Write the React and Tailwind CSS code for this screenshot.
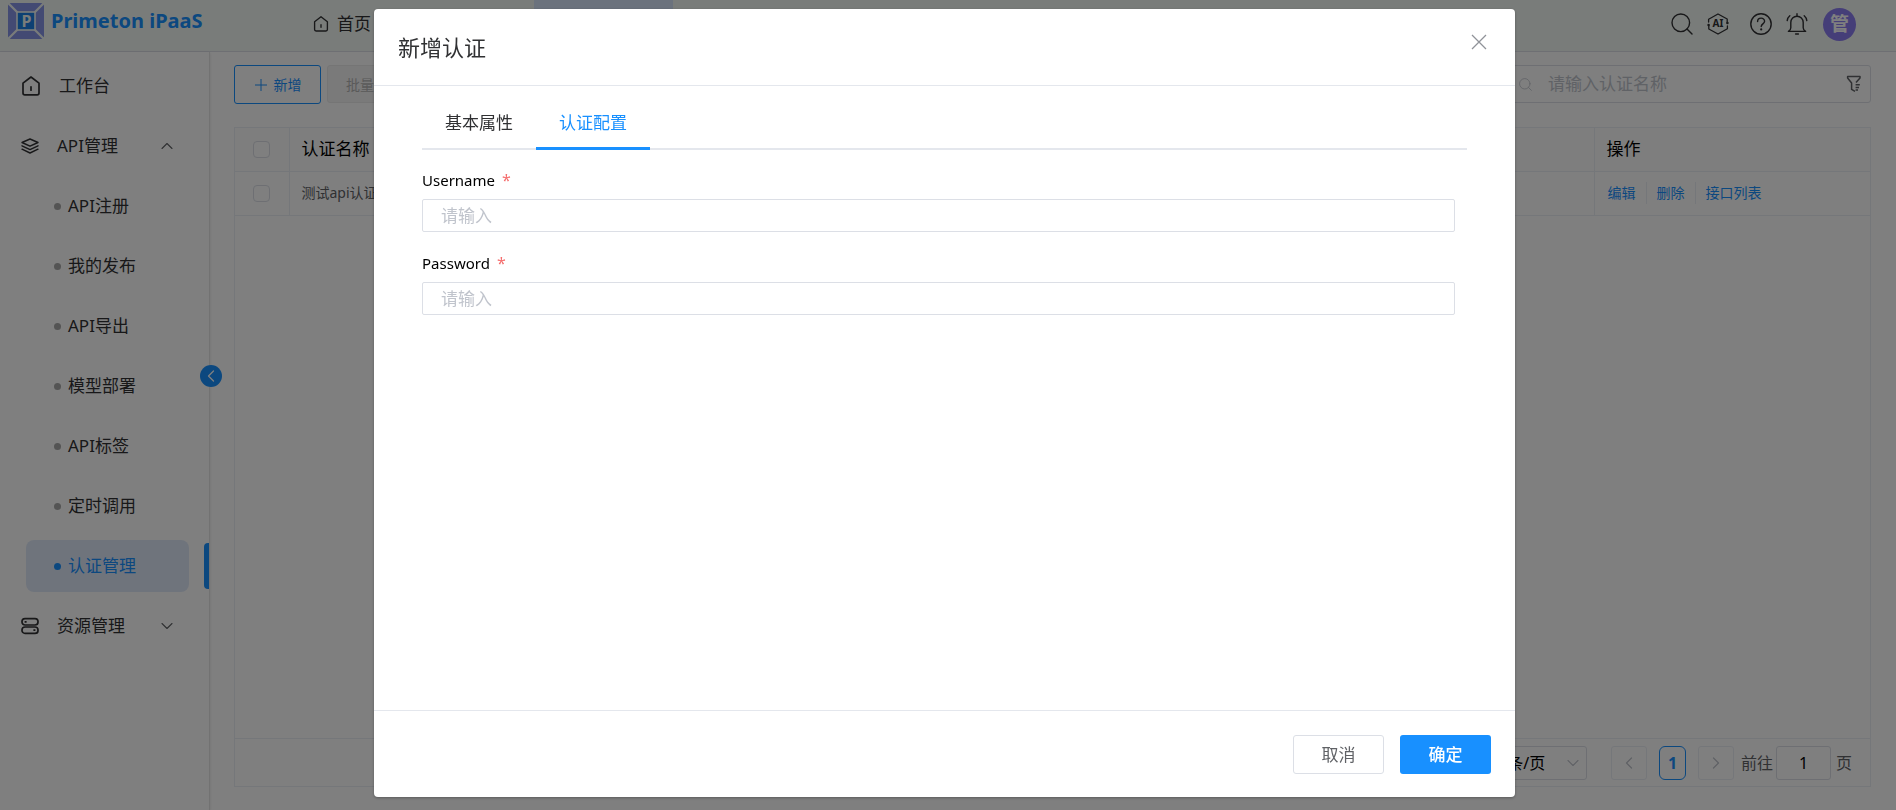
import React, { useState } from "react";
import { FiChevronDown, FiChevronLeft, FiChevronRight, FiChevronUp } from "react-icons/fi";

const apiMenu = ["API注册", "我的发布", "API导出", "模型部署", "API标签", "定时调用", "认证管理"];

const tabs = ["基本属性", "认证配置"];

const fields = [
  { id: "username", label: "Username" },
  { id: "password", label: "Password" },
];

const HomeIcon = ({ className }) => (
  <svg viewBox="0 0 20 20" className={className} fill="none" stroke="currentColor" strokeWidth="1.7" strokeLinejoin="round" strokeLinecap="round">
    <path d="M2 7.2 10 1l8 6.2V17a1.8 1.8 0 0 1-1.8 1.8H3.8A1.8 1.8 0 0 1 2 17z" />
    <path d="M10 10.8v3.4" />
  </svg>
);

const LayersIcon = () => (
  <svg viewBox="0 0 18 18" className="size-[18px]" fill="none" stroke="currentColor" strokeWidth="1.4" strokeLinejoin="round" strokeLinecap="round">
    <path d="M9 2 17 5.5 9 9.2 1 5.5z" />
    <path d="m1 8.8 8 3.8 8-3.8M1 12.2 9 16l8-3.8" />
  </svg>
);

const ServerIcon = () => (
  <svg viewBox="0 0 18 18" className="size-[18px]" fill="none" stroke="currentColor" strokeWidth="1.7">
    <rect x="1" y="1.6" width="16" height="6.4" rx="3" />
    <rect x="1" y="10" width="16" height="6.4" rx="3" />
    <path d="M3.6 4.8h2M12.4 13.2h2" />
  </svg>
);

const SearchIcon = ({ className }) => (
  <svg viewBox="0 0 22 22" className={className} fill="none" stroke="currentColor" strokeWidth="1.4" strokeLinecap="round">
    <circle cx="9.8" cy="9.8" r="8.8" />
    <path d="m16 16 5 5" />
  </svg>
);

const AiIcon = () => (
  <svg viewBox="0 0 22 22" className="size-[22px]" fill="none" stroke="currentColor" strokeWidth="1.3" strokeLinejoin="round" strokeLinecap="round">
    <path d="M1.6 9V6.2L11 1l9.2 5v3M20.4 13v2.8L11 21l-9.2-5v-3" />
    <circle cx="1.6" cy="12" r="1.3" fill="currentColor" stroke="none" />
    <circle cx="20.4" cy="10" r="1.3" fill="currentColor" stroke="none" />
    <text x="11" y="14.4" textAnchor="middle" fontSize="10" fontWeight="bold" fill="currentColor" stroke="none">AI</text>
  </svg>
);

const HelpIcon = () => (
  <svg viewBox="0 0 22 22" className="size-[22px]" fill="none" stroke="currentColor" strokeWidth="1.4" strokeLinecap="round">
    <circle cx="11" cy="11" r="10.2" />
    <path d="M7.6 8.6c0-4.6 7-4.4 7-.4 0 2.6-3.4 2.8-3.4 5.4" />
    <circle cx="11.2" cy="16.4" r="1.1" fill="currentColor" stroke="none" />
  </svg>
);

const BellIcon = () => (
  <svg viewBox="0 0 22 22" className="size-[22px]" fill="none" stroke="currentColor" strokeWidth="1.4" strokeLinejoin="round" strokeLinecap="round">
    <path d="M2.4 18.4h17.2c-1.4-.8-2.4-2-2.4-3.6V9.4a6.2 6.2 0 0 0-12.4 0v5.4c0 1.6-1 2.8-2.4 3.6z" />
    <path d="M11 .8v2M9.6 21h2.8M3.8 2.8C2.4 4 1.4 5.6 1.2 7.6M18.2 2.8c1.4 1.2 2.4 2.8 2.6 4.8" />
  </svg>
);

const FilterIcon = () => (
  <svg viewBox="0 0 16 18" className="h-[18px] w-4" fill="none" stroke="currentColor" strokeWidth="1.5" strokeLinejoin="round">
    <path d="M10 7.6 14 3V1.4H1.6V3l4 5v6.4L9 16.4" />
    <path d="M9.6 9.8h4.2M9.6 12.4h3.4M9.6 15h2.4" />
  </svg>
);

const Logo = () => (
  <svg viewBox="0 0 36 36" className="size-9">
    <rect width="36" height="36" rx="3" fill="#8795e6" />
    <path d="m0 0 36 36M36 0 0 36" stroke="#f3f8f5" strokeWidth="2.2" />
    <rect x="9" y="9" width="18" height="18" fill="#1a80e6" stroke="#f3f8f5" strokeWidth="1.6" />
    <text x="18.4" y="24" textAnchor="middle" fontSize="16" fontWeight="bold" fill="#f3f8f5">P</text>
  </svg>
);

const Header = () => (
  <header className="flex h-[52px] shrink-0 items-start justify-between border-b border-[#dcdfe6] bg-[#f3f8f5] pl-2 pr-10 text-[#303133]">
    <div className="flex">
      <div className="flex w-[305px] items-start gap-[7px] pt-[3px]">
        <Logo />
        <h1 className="font-['Noto_Sans'] text-[20px] leading-9 font-bold text-[#1890ff]">Primeton iPaaS</h1>
      </div>
      <a href="#home" className="flex h-12 items-center gap-2 text-[17px]">
        <HomeIcon className="size-4" />
        首页
      </a>
      <div className="ml-[163px] h-[51px] w-[139px] bg-[#d6e4fb]" />
    </div>
    <div className="flex h-12 items-center">
      <button type="button" aria-label="搜索"><SearchIcon className="size-[22px]" /></button>
      <button type="button" aria-label="AI" className="ml-[14px]"><AiIcon /></button>
      <button type="button" aria-label="帮助" className="ml-[21px]"><HelpIcon /></button>
      <button type="button" aria-label="通知" className="ml-[14px]"><BellIcon /></button>
      <span className="ml-[15px] flex size-[33px] items-center justify-center rounded-full bg-[#8b7cf0] text-[19px] font-bold text-white">
        管
      </span>
    </div>
  </header>
);

const Sidebar = () => (
  <nav className="relative w-[210px] shrink-0 border-r border-[#e4e4e4] pt-1 text-[17px] text-[#303133] shadow-sm">
    <a href="#workbench" className="flex h-[60px] items-center pl-[21px]">
      <HomeIcon className="size-5" />
      <span className="ml-[18px]">工作台</span>
    </a>
    <button type="button" className="flex h-[60px] w-full items-center pl-[21px] pr-8">
      <LayersIcon />
      <span className="ml-[18px] flex-1 text-left">API管理</span>
      <FiChevronUp className="size-5 stroke-[1.3] text-[#606266]" />
    </button>
    <ul>
      {apiMenu.map((item) => {
        const active = item === "认证管理";
        return (
          <li key={item} className="relative flex h-[60px] items-center pl-[26px] pr-5">
            <a
              href="#menu"
              className={`flex h-[52px] flex-1 items-center gap-[7px] rounded-lg pl-7 ${
                active ? "bg-[#dfe9f9] text-[#1890ff]" : ""
              }`}
            >
              <span className={`size-[7px] rounded-full ${active ? "bg-[#1890ff]" : "bg-[#a8a8a8]"}`} />
              {item}
            </a>
            {active && <span className="absolute right-0 h-[46px] w-[5px] rounded-l bg-[#1890ff]" />}
          </li>
        );
      })}
    </ul>
    <button type="button" className="flex h-[60px] w-full items-center pl-[21px] pr-8">
      <ServerIcon />
      <span className="ml-[18px] flex-1 text-left">资源管理</span>
      <FiChevronDown className="size-5 stroke-[1.3] text-[#606266]" />
    </button>
    <button
      type="button"
      aria-label="收起菜单"
      className="absolute top-[313px] -right-[13px] flex size-[22px] items-center justify-center rounded-full bg-[#1890ff] text-white"
    >
      <FiChevronLeft className="size-5 stroke-[1.5]" />
    </button>
  </nav>
);

const Toolbar = () => (
  <div className="flex items-start justify-between">
    <div className="flex gap-[6px] text-[14px]">
      <button type="button" className="flex h-[39px] w-[87px] items-center justify-center gap-[6px] rounded-[3px] border border-[#1890ff] text-[#1890ff]">
        <svg viewBox="0 0 14 14" className="size-[14px]" stroke="currentColor" strokeWidth="1">
          <path d="M7 1v12M1 7h12" />
        </svg>
        新增
      </button>
      <button type="button" disabled className="h-[38px] rounded-[3px] border border-[#ebebeb] bg-[#f5f5f5] px-[18px] text-[#b4b4b4]">
        批量删除
      </button>
    </div>
    <div className="flex h-[38px] w-[380px] items-center rounded-[3px] border border-[#dcdfe6] pr-2 pl-[27px] text-[#c0c4cc]">
      <SearchIcon className="size-[13px]" />
      <input
        type="text"
        aria-label="认证名称"
        placeholder="请输入认证名称"
        className="ml-4 min-w-0 flex-1 text-[17px] placeholder:text-[#c0c4cc]"
      />
      <button type="button" aria-label="筛选" className="text-[#606266]"><FilterIcon /></button>
    </div>
  </div>
);

const AuthTable = () => (
  <div className="mt-[23px] flex flex-1 flex-col border border-[#ebeef5]">
    <table className="w-full table-fixed border-collapse text-left">
      <thead>
        <tr className="h-[43px] border-b border-[#ebeef5] bg-[#fcfcfc] text-[17px] leading-6 text-black">
          <th className="w-[54px] border-r border-[#ebeef5] p-0">
            <input type="checkbox" aria-label="全选" className="mx-auto block size-[17px] appearance-none rounded-sm border border-[#dcdfe6] bg-white" />
          </th>
          <th className="border-r border-[#ebeef5] py-0 pl-3 font-normal">认证名称</th>
          <th className="w-[276px] py-0 pl-3 font-normal">操作</th>
        </tr>
      </thead>
      <tbody>
        <tr className="h-11 border-b border-[#ebeef5] text-[14px] leading-[22px] text-[#606266]">
          <td className="border-r border-[#ebeef5] p-0">
            <input type="checkbox" aria-label="选择测试api认证" className="mx-auto block size-[17px] appearance-none rounded-sm border border-[#dcdfe6] bg-white" />
          </td>
          <td className="border-r border-[#ebeef5] py-0 pl-3">测试api认证</td>
          <td className="py-0 pl-[13px]">
            <div className="flex items-center text-[#1890ff]">
              <button type="button" className="border-r border-[#ebeef5] pr-[10px]">编辑</button>
              <button type="button" className="border-r border-[#ebeef5] px-[10px]">删除</button>
              <button type="button" className="pl-[10px]">接口列表</button>
            </div>
          </td>
        </tr>
      </tbody>
    </table>
    <div className="mt-auto flex h-12 items-center justify-end border-t border-[#ebeef5] pr-[18px] text-[16px] text-[#606266]">
      <div className="relative flex items-center">
        <select aria-label="每页条数" className="h-[34px] w-[120px] appearance-none rounded-[3px] border border-[#dcdfe6] pl-[21px] text-[16px] text-black">
          <option>10条/页</option>
        </select>
        <FiChevronDown className="pointer-events-none absolute right-1 size-5 stroke-[1.3] text-[#c0c4cc]" />
      </div>
      <button type="button" aria-label="上一页" disabled className="ml-6 flex h-[34px] w-9 items-center justify-center rounded-[3px] border border-[#ebeef5] text-[#c0c4cc]">
        <FiChevronLeft className="size-5 stroke-[1.5]" />
      </button>
      <button type="button" className="ml-3 h-[34px] w-[27px] rounded-md border border-[#1890ff] font-bold text-[#1890ff]">1</button>
      <button type="button" aria-label="下一页" disabled className="ml-3 flex h-[34px] w-9 items-center justify-center rounded-[3px] border border-[#ebeef5] text-[#c0c4cc]">
        <FiChevronRight className="size-5 stroke-[1.5]" />
      </button>
      <label htmlFor="page" className="ml-[7px]">前往</label>
      <input id="page" type="text" defaultValue="1" className="mr-[5px] ml-[3px] h-[34px] w-[55px] rounded-[3px] border border-[#dcdfe6] text-center text-black" />
      页
    </div>
  </div>
);

const AuthDialog = () => {
  const [activeTab, setActiveTab] = useState("认证配置");
  const [values, setValues] = useState({ username: "", password: "" });

  return (
    <div
      role="dialog"
      aria-modal="true"
      aria-labelledby="dialog-title"
      className="flex h-full w-[60.4%] min-w-[640px] flex-col rounded-[4px] bg-white shadow-[0_1px_3px_rgba(0,0,0,0.3)]"
    >
      <div className="flex h-[77px] shrink-0 items-start justify-between border-b border-[#e4e7ed] pr-[28px] pl-6">
        <h2 id="dialog-title" className="text-[22px] leading-[76px] text-[#303133]">新增认证</h2>
        <button type="button" aria-label="关闭" className="mt-[25px] text-[#909399]">
          <svg viewBox="0 0 16 16" className="size-4" stroke="currentColor" strokeWidth="1.3">
            <path d="m1 1 14 14M15 1 1 15" />
          </svg>
        </button>
      </div>
      <div className="flex-1 px-12">
        <div role="tablist" className="flex h-16 border-b-2 border-[#e4e7ed]">
          {tabs.map((tab) => (
            <button
              key={tab}
              type="button"
              role="tab"
              aria-selected={tab === activeTab}
              onClick={() => setActiveTab(tab)}
              className={`h-16 border-b-[3px] px-[23px] pt-3 text-[17px] ${
                tab === activeTab ? "border-[#1890ff] text-[#1890ff]" : "border-transparent text-[#303133]"
              }`}
            >
              {tab}
            </button>
          ))}
        </div>
        <form className="pt-4 pr-3">
          {fields.map((field) => (
            <div key={field.id} className="mb-[17px]">
              <label htmlFor={field.id} className="block h-[33px] text-[15px] leading-[28px] text-black">
                {field.label}
                <span className="ml-[7px] text-[16px] text-[#f56c6c]">*</span>
              </label>
              <input
                id={field.id}
                type={field.id === "password" ? "password" : "text"}
                placeholder="请输入"
                value={values[field.id]}
                onChange={(e) => setValues({ ...values, [field.id]: e.target.value })}
                className="block h-[33px] w-full rounded-[2px] border border-[#dcdfe6] px-[18px] text-[17px] placeholder:text-[#c0c4cc]"
              />
            </div>
          ))}
        </form>
      </div>
      <div className="flex h-[87px] shrink-0 justify-end gap-4 border-t border-[#e4e7ed] pt-6 pr-6 text-[17px]">
        <button type="button" className="h-[39px] w-[91px] rounded-[3px] border border-[#dcdfe6] text-[#606266]">取消</button>
        <button type="button" className="h-[39px] w-[91px] rounded-[3px] bg-[#1890ff] font-medium text-white">确定</button>
      </div>
    </div>
  );
};

const App = () => {
  return (
    <div className="flex h-screen flex-col bg-white font-['Noto_Sans','Noto_Sans_CJK_SC',sans-serif]">
      <Header />
      <div className="flex min-h-0 flex-1">
        <Sidebar />
        <main className="flex min-w-0 flex-1 flex-col pt-[13px] pr-[25px] pb-[23px] pl-6">
          <Toolbar />
          <AuthTable />
        </main>
      </div>
      {/* modal layer over the whole page */}
      <div className="fixed inset-0 z-10 flex justify-center bg-black/50 pt-[9px] pr-[7px] pb-[13px]">
        <AuthDialog />
      </div>
    </div>
  );
};

export default App;
